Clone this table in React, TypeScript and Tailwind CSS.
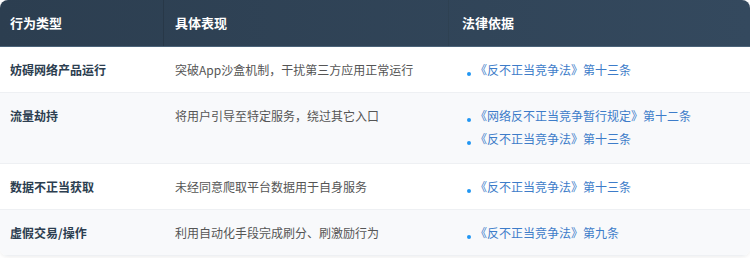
const rows = [
  {
    type: '妨碍网络产品运行',
    desc: '突破App沙盒机制，干扰第三方应用正常运行',
    laws: ['《反不正当竞争法》第十三条'],
    bg: 'bg-white',
  },
  {
    type: '流量劫持',
    desc: '将用户引导至特定服务，绕过其它入口',
    laws: ['《网络反不正当竞争暂行规定》第十二条', '《反不正当竞争法》第十三条'],
    bg: 'bg-[#f8f9fb]',
  },
  {
    type: '数据不正当获取',
    desc: '未经同意爬取平台数据用于自身服务',
    laws: ['《反不正当竞争法》第十三条'],
    bg: 'bg-white',
  },
  {
    type: '虚假交易/操作',
    desc: '利用自动化手段完成刷分、刷激励行为',
    laws: ['《反不正当竞争法》第九条'],
    bg: 'bg-[#f8f9fb]',
  },
];

export default function App() {
  return (
    <div
      className="w-[750px] h-[258px] bg-white"
      style={{ fontFamily: '"Noto Sans CJK SC", "Noto Sans", sans-serif' }}
    >
      <div className="h-[256px] rounded-lg overflow-hidden shadow-[0_1px_4px_rgba(0,0,0,0.08)]">
        {/* header */}
        <div className="grid grid-cols-[164px_285px_1fr] h-[47px] bg-gradient-to-r from-[#2c3e50] to-[#34495e] border-b border-[#4b6379] text-white text-[13px] font-bold">
          <div className="flex items-center pl-[10px] border-r border-[#283848]">行为类型</div>
          <div className="flex items-center pl-[11px] border-r border-[#2e4152]">具体表现</div>
          <div className="flex items-center pl-[13px]">法律依据</div>
        </div>

        {rows.map((r, i) => (
          <div
            key={i}
            className={`grid grid-cols-[164px_285px_1fr] border-b border-[#eef0f3] ${r.bg}`}
          >
            <div className="pl-[10px] pt-[13px] pb-[12px] text-[12px] leading-[20px] font-bold text-[#2c3e50]">
              {r.type}
            </div>
            <div className="pl-[11px] pt-[13px] pb-[12px] text-[12px] leading-[20px] text-[#555]">
              {r.desc}
            </div>
            <ul className={`pl-[18px] pt-[13px] flex flex-col gap-[3px] ${r.laws.length > 1 ? 'pb-[14px]' : 'pb-[12px]'}`}>
              {r.laws.map((l, j) => (
                <li key={j} className="flex items-start text-[12px] leading-[20px] text-[#3d7cc9]">
                  <span className="w-[4px] h-[4px] rounded-full bg-[#2196f3] mt-[12px] mr-[4px] shrink-0" />
                  {l}
                </li>
              ))}
            </ul>
          </div>
        ))}
      </div>
    </div>
  );
}
